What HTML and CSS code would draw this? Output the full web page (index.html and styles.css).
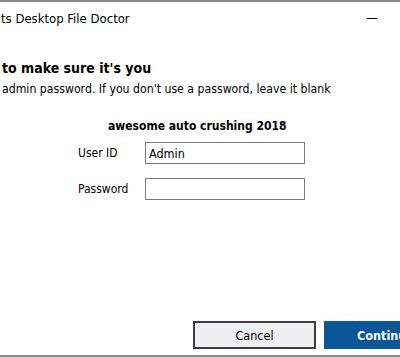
FILE: index.html
```html
<!DOCTYPE html>
<html lang="en">
	<head>
		<meta charset="utf-8">
		<meta name="viewport" content="width=device-width, initial-scale=1">
		<link rel="stylesheet" href="styles.css">
	</head>
	<body>
		<div class="window">
			<div class="titlebar">
				<span class="title">ts Desktop File Doctor</span>
				<span class="minimize"></span>
			</div>

			<div class="content">
				<h1>to make sure it's you</h1>
				<p class="hint">admin password. If you don't use a password, leave it blank</p>

				<div class="login">
					<div class="machine">awesome auto crushing 2018</div>
					<div class="row">
						<label for="user">User ID</label>
						<input id="user" type="text" value="Admin">
					</div>
					<div class="row">
						<label for="pass">Password</label>
						<input id="pass" type="password">
					</div>
				</div>
			</div>

			<div class="actions">
				<button class="cancel">Cancel</button>
				<button class="continue">Continue</button>
			</div>
		</div>
	</body>
</html>
```

FILE: styles.css
```css
html, body {
	margin: 0;
	background-color: #fff;
}

body {
	width: 400px;
	height: 357px;
	overflow: hidden;
	font: 12px "DejaVu Sans Condensed", "DejaVu Sans", sans-serif;
	color: #000;
}

.window {
	height: 357px;
	box-sizing: border-box;
	border-top: 2px solid #8c8c8c;
	border-bottom: 2px solid #8c8c8c;
	display: flex;
	flex-direction: column;
}

.titlebar {
	height: 32px;
	display: flex;
	align-items: center;
	justify-content: space-between;
	padding-left: 1px;
}

.title {
	font-size: 13px;
}

.minimize {
	width: 10px;
	border-top: 1px solid #000;
	margin-right: 23px;
}

.content {
	flex: 1;
	padding-left: 2px;
}

h1 {
	margin: 26px 0 0;
	font-size: 14px;
	font-weight: bold;
}

.hint {
	margin: 6px 0 0;
	font-size: 12.2px;
}

.login {
	margin-left: 76px;
	width: 230px;
}

.machine {
	margin-top: 23px;
	margin-left: 30px;
	font-weight: bold;
}

.row {
	display: flex;
	align-items: center;
	margin-top: 14px;
}

.machine + .row {
	margin-top: 9px;
}

.row label {
	width: 67px;
}

.row input {
	width: 160px;
	height: 22px;
	box-sizing: border-box;
	margin: 0;
	border: 1px solid #7a7a7a;
	padding: 0 3px;
	font: 12.5px "DejaVu Sans Condensed", "DejaVu Sans", sans-serif;
	color: #000;
}

.actions {
	display: flex;
	padding-left: 193px;
	gap: 8px;
	margin-bottom: 6px;
	overflow: hidden;
}

.actions button {
	height: 28px;
	box-sizing: border-box;
	font: 12.5px "DejaVu Sans Condensed", "DejaVu Sans", sans-serif;
	flex-shrink: 0;
}

.cancel {
	width: 123px;
	background-color: #efeff1;
	border: 2px solid #3c3c3c;
	color: #000;
}

.continue {
	width: 123px;
	background-color: #0a5696;
	border: 2px solid #0a5696;
	color: #fff;
	font-weight: bold !important;
}
```
